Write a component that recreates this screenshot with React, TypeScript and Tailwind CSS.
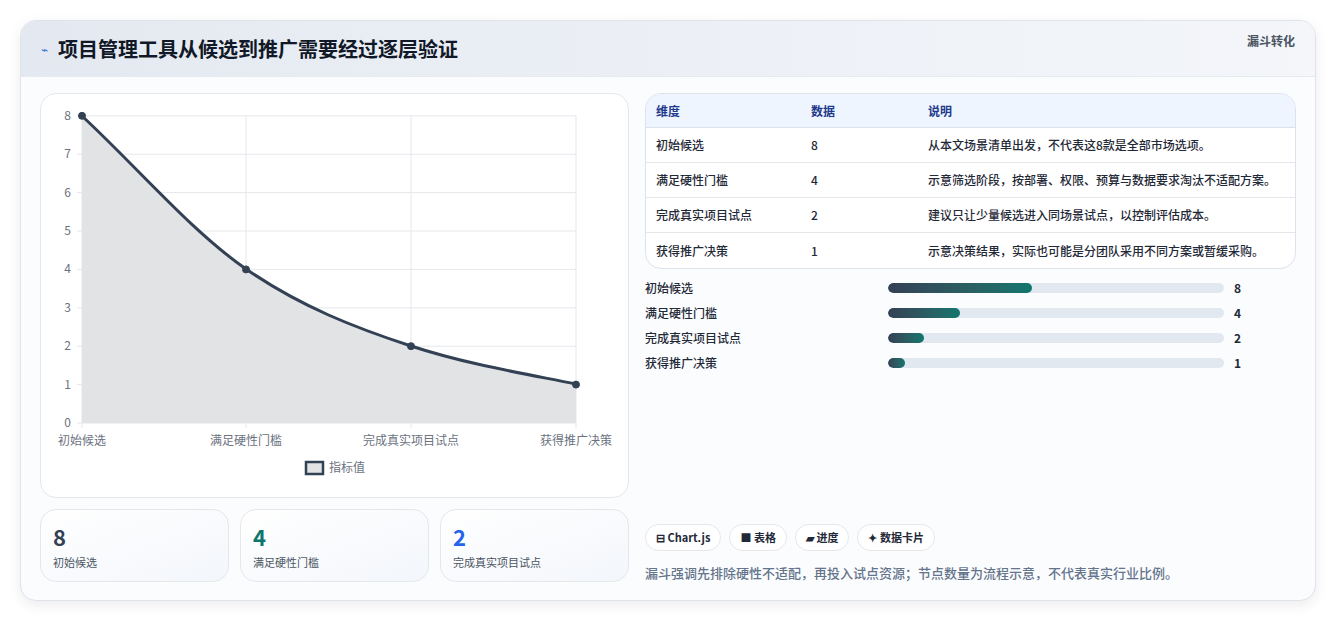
import React from 'react'

const rows = [
  { name: '初始候选', v: 8, note: '从本文场景清单出发，不代表这8款是全部市场选项。', w: '43%' },
  { name: '满足硬性门槛', v: 4, note: '示意筛选阶段，按部署、权限、预算与数据要求淘汰不适配方案。', w: '21.5%' },
  { name: '完成真实项目试点', v: 2, note: '建议只让少量候选进入同场景试点，以控制评估成本。', w: '10.7%' },
  { name: '获得推广决策', v: 1, note: '示意决策结果，实际也可能是分团队采用不同方案或暂缓采购。', w: '5.2%' },
]

const font = { fontFamily: '"Noto Sans CJK SC", "Noto Sans", sans-serif' }

function Chart() {
  const ys = [0, 1, 2, 3, 4, 5, 6, 7, 8]
  const y = (v: number) => 422 - v * 38.4
  const xs = [81, 245, 410, 575]
  const pts = [8, 4, 2, 1]
  const curve = 'M81,115 C136,166 190,230 245,268 C300,306 355,327 410,345 C465,363 520,372 575,383'
  return (
    <svg width="589" height="403" viewBox="40 93 589 403" className="block">
      {ys.map((v) => (
        <g key={v}>
          <line x1="76" x2="575" y1={y(v)} y2={y(v)} stroke="#e5e7eb" />
          <text x="70" y={y(v) + 4} fontSize="12" fill="#6b7280" textAnchor="end">{v}</text>
        </g>
      ))}
      {xs.map((x) => (
        <line key={x} x1={x} x2={x} y1="115" y2="427" stroke="#e5e7eb" />
      ))}
      <path d={curve + ' L575,422 L81,422 Z'} fill="#e2e3e5" />
      <path d={curve} fill="none" stroke="#334155" strokeWidth="3" />
      {xs.map((x, i) => (
        <circle key={x} cx={x} cy={y(pts[i])} r="3.5" fill="#334155" stroke="#334155" />
      ))}
      {rows.map((r, i) => (
        <text key={r.name} x={xs[i]} y="444" fontSize="12" fill="#6b7280" textAnchor="middle">{r.name}</text>
      ))}
      <rect x="305" y="461" width="17" height="12" fill="#e2e3e5" stroke="#334155" strokeWidth="2.5" />
      <text x="328" y="471" fontSize="12" fill="#6b7280">指标值</text>
    </svg>
  )
}

export default function App() {
  return (
    <div className="min-h-screen bg-white pt-5 pb-5 px-5" style={font}>
      <div className="rounded-2xl border border-[#dfe3ea] bg-[#fbfcfe] shadow-[0_4px_14px_rgba(0,0,0,0.08)] overflow-hidden">
        <div className="h-14 flex items-center justify-between pl-5 pr-5 bg-gradient-to-r from-[#e4e9f1] to-[#f4f6fa] border-b border-[#e5e9f0]">
          <div className="flex items-center gap-2.5">
            <span className="text-[#3b6fd8] text-xs">⌁</span>
            <h1 className="text-[20px] font-bold text-[#111827]">项目管理工具从候选到推广需要经过逐层验证</h1>
          </div>
          <span className="self-start mt-3 text-xs font-bold text-[#4b5563]">漏斗转化</span>
        </div>
        <div className="flex gap-4 px-[19px] pt-4 pb-[18px]">
          <div className="w-[589px] flex flex-col gap-[11px]">
            <div className="rounded-2xl border border-[#e5e7eb] bg-white overflow-hidden">
              <Chart />
            </div>
            <div className="grid grid-cols-3 gap-[11px]">
              {[
                { v: '8', c: 'text-[#334155]', l: '初始候选' },
                { v: '4', c: 'text-[#0f766e]', l: '满足硬性门槛' },
                { v: '2', c: 'text-[#2563eb]', l: '完成真实项目试点' },
              ].map((s) => (
                <div key={s.l} className="h-[73px] rounded-2xl border border-[#e5e7eb] bg-gradient-to-br from-white to-[#f3f6fb] px-3 pt-2.5">
                  <div className={`text-[22px] font-bold leading-8 ${s.c}`}>{s.v}</div>
                  <div className="text-[11px] text-[#4b5563] mt-0.5">{s.l}</div>
                </div>
              ))}
            </div>
          </div>
          <div className="flex-1 flex flex-col">
            <div className="rounded-2xl border border-[#dbe2ea] bg-white overflow-hidden text-xs">
              <div className="h-[34px] flex items-center bg-[#eef5ff] border-b border-[#dbe2ea] font-bold text-[#1e3a8a]">
                <div className="w-[165px] pl-2.5">维度</div>
                <div className="w-[117px]">数据</div>
                <div>说明</div>
              </div>
              {rows.map((r, i) => (
                <div key={r.name} className={`h-[35px] flex items-center text-[#1f2937] font-medium ${i < 3 ? 'border-b border-[#e5e7eb]' : ''}`}>
                  <div className="w-[165px] pl-2.5">{r.name}</div>
                  <div className="w-[117px]">{r.v}</div>
                  <div>{r.note}</div>
                </div>
              ))}
            </div>
            <div className="flex flex-col gap-[11px] mt-3 text-xs font-medium text-[#1f2937]">
              {rows.map((r) => (
                <div key={r.name} className="flex items-center h-[14px]">
                  <div className="w-[243px]">{r.name}</div>
                  <div className="w-[336px] h-[10px] rounded-full bg-[#e2e8f0] overflow-hidden">
                    <div className="h-full rounded-full bg-gradient-to-r from-[#334155] to-[#0f766e]" style={{ width: r.w }} />
                  </div>
                  <div className="ml-2.5 font-bold">{r.v}</div>
                </div>
              ))}
            </div>
            <div className="mt-auto flex gap-2 text-[11px] font-bold text-[#1f2937]">
              <span className="h-[27px] px-2.5 flex items-center rounded-full border border-[#e5e7eb] bg-white">⊟ Chart.js</span>
              <span className="h-[27px] px-2.5 flex items-center rounded-full border border-[#e5e7eb] bg-white">■ 表格</span>
              <span className="h-[27px] px-2.5 flex items-center rounded-full border border-[#e5e7eb] bg-white">▰ 进度</span>
              <span className="h-[27px] px-2.5 flex items-center rounded-full border border-[#e5e7eb] bg-white">✦ 数据卡片</span>
            </div>
            <p className="mt-3 text-[13px] font-medium text-[#64748b]">漏斗强调先排除硬性不适配，再投入试点资源；节点数量为流程示意，不代表真实行业比例。</p>
          </div>
        </div>
      </div>
    </div>
  )
}
